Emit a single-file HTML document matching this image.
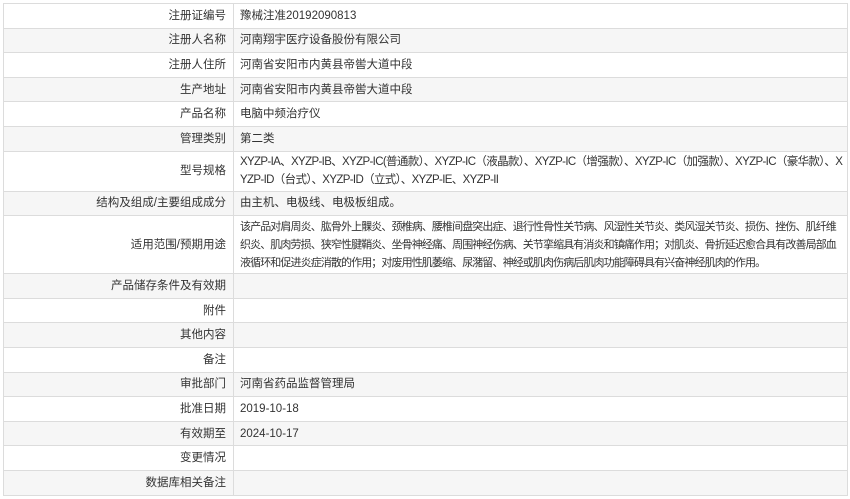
<!DOCTYPE html>
<html><head><meta charset="utf-8"><style>
html,body{margin:0;padding:0;background:#fff;}
table{position:absolute;left:3px;top:3px;width:845px;border-collapse:collapse;table-layout:fixed;font-family:"Liberation Sans","Noto Sans CJK SC",sans-serif;font-size:11.5px;color:#333;}
td{border:1px solid #dcdcdc;height:23.6px;padding:0 6px;line-height:18px;}
td.l{text-align:right;padding-right:7px;}
tr:nth-child(even) td{background:#f6f6f6;}
.n{white-space:nowrap;overflow:hidden;}
.u{font-size:11px;letter-spacing:-0.9px;}
.m{font-size:11.5px;letter-spacing:-0.65px;}
</style></head><body>
<table>
<colgroup><col style="width:230px"><col></colgroup>
<tr><td class="l">注册证编号</td><td>豫械注准20192090813</td></tr>
<tr><td class="l">注册人名称</td><td>河南翔宇医疗设备股份有限公司</td></tr>
<tr><td class="l">注册人住所</td><td>河南省安阳市内黄县帝喾大道中段</td></tr>
<tr><td class="l">生产地址</td><td>河南省安阳市内黄县帝喾大道中段</td></tr>
<tr><td class="l">产品名称</td><td>电脑中频治疗仪</td></tr>
<tr><td class="l">管理类别</td><td>第二类</td></tr>
<tr><td class="l" style="height:39px">型号规格</td><td class="n m">XYZP-IA、XYZP-IB、XYZP-IC(普通款）、XYZP-IC（液晶款）、XYZP-IC（增强款）、XYZP-IC（加强款）、XYZP-IC（豪华款）、X<br>YZP-ID（台式）、XYZP-ID（立式）、XYZP-IE、XYZP-II</td></tr>
<tr><td class="l">结构及组成/主要组成成分</td><td>由主机、电极线、电极板组成。</td></tr>
<tr><td class="l" style="height:57px">适用范围/预期用途</td><td class="n u">该产品对肩周炎、肱骨外上髁炎、颈椎病、腰椎间盘突出症、退行性骨性关节病、风湿性关节炎、类风湿关节炎、损伤、挫伤、肌纤维<br>织炎、肌肉劳损、狭窄性腱鞘炎、坐骨神经痛、周围神经伤病、关节挛缩具有消炎和镇痛作用；对肌炎、骨折延迟愈合具有改善局部血<br>液循环和促进炎症消散的作用；对废用性肌萎缩、尿潴留、神经或肌肉伤病后肌肉功能障碍具有兴奋神经肌肉的作用。</td></tr>
<tr><td class="l">产品储存条件及有效期</td><td></td></tr>
<tr><td class="l">附件</td><td></td></tr>
<tr><td class="l">其他内容</td><td></td></tr>
<tr><td class="l">备注</td><td></td></tr>
<tr><td class="l">审批部门</td><td>河南省药品监督管理局</td></tr>
<tr><td class="l">批准日期</td><td>2019-10-18</td></tr>
<tr><td class="l">有效期至</td><td>2024-10-17</td></tr>
<tr><td class="l">变更情况</td><td></td></tr>
<tr><td class="l">数据库相关备注</td><td></td></tr>
</table>
</body></html>
